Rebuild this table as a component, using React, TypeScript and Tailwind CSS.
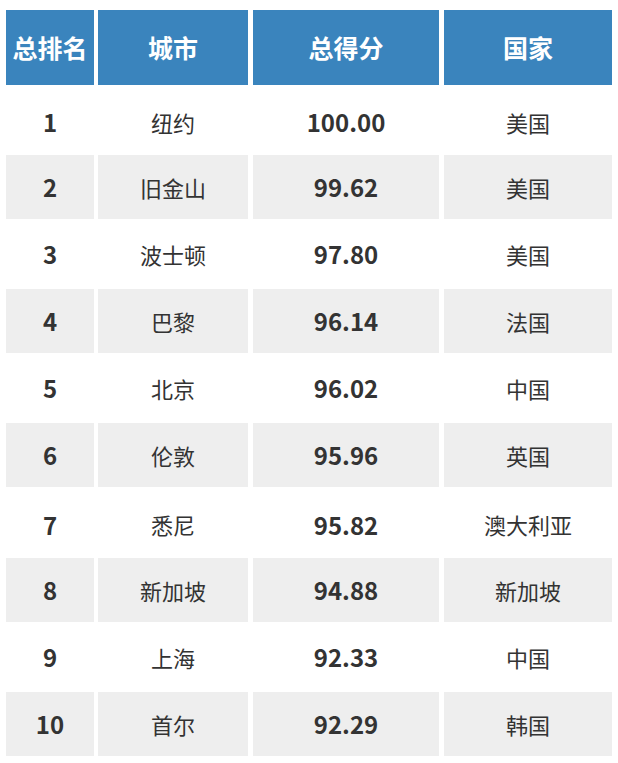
import React from "react";

const rows = [
  ["1", "纽约", "100.00", "美国"],
  ["2", "旧金山", "99.62", "美国"],
  ["3", "波士顿", "97.80", "美国"],
  ["4", "巴黎", "96.14", "法国"],
  ["5", "北京", "96.02", "中国"],
  ["6", "伦敦", "95.96", "英国"],
  ["7", "悉尼", "95.82", "澳大利亚"],
  ["8", "新加坡", "94.88", "新加坡"],
  ["9", "上海", "92.33", "中国"],
  ["10", "首尔", "92.29", "韩国"],
];

export default function App() {
  return (
    <div
      className="w-[618px] h-[763px] bg-white pt-[10px] pl-[6px] text-[#333333]"
      style={{ fontFamily: '"Noto Sans CJK SC", "Noto Sans", sans-serif' }}
    >
      <div className="flex h-[75px] text-white font-bold text-[25px]">
        <div className="w-[88px] bg-[#3a84bd] flex items-center justify-center">总排名</div>
        <div className="w-[150px] ml-[4px] bg-[#3a84bd] flex items-center justify-center">城市</div>
        <div className="w-[186px] ml-[5px] bg-[#3a84bd] flex items-center justify-center">总得分</div>
        <div className="w-[168px] ml-[5px] bg-[#3a84bd] flex items-center justify-center">国家</div>
      </div>
      <div className="flex flex-col gap-[4px] mt-[4px]">
        {rows.map((r, i) => {
          const gray = i % 2 === 1;
          const bg = gray ? "bg-[#eeeeee]" : "bg-white";
          const h = gray ? "h-[64px]" : i === 6 ? "h-[63px] pt-[4px]" : i === 0 ? "h-[62px] pt-[4px]" : "h-[62px]";
          return (
            <div key={i} className={`flex ${h} text-[22px]`}>
              <div className={`w-[88px] ${bg} flex items-center justify-center font-bold text-[24px]`}>{r[0]}</div>
              <div className={`w-[150px] ml-[4px] ${bg} flex items-center justify-center`}>{r[1]}</div>
              <div className={`w-[186px] ml-[5px] ${bg} flex items-center justify-center font-bold text-[24px]`}>{r[2]}</div>
              <div className={`w-[168px] ml-[5px] ${bg} flex items-center justify-center`}>{r[3]}</div>
            </div>
          );
        })}
      </div>
    </div>
  );
}
